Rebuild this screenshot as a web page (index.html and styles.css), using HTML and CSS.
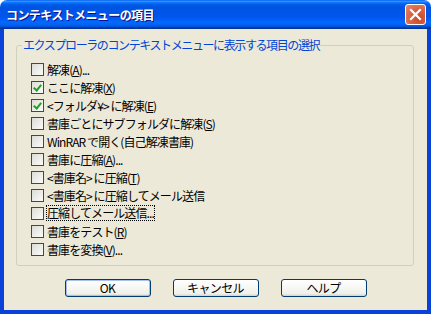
FILE: index.html
```html
<!DOCTYPE html>
<html lang="ja">
<head>
    <meta charset="UTF-8">
    <title>コンテキストメニューの項目</title>
    <link rel="stylesheet" href="styles.css">
</head>
<body>
    <div class="window">
        <div class="titlebar">
            <span class="title">コンテキストメニューの項目</span>
            <span class="close-btn">
                <svg width="13" height="13" viewBox="0 0 13 13">
                    <path d="M2 2 L11 11 M11 2 L2 11" stroke="#fff" stroke-width="2.2" stroke-linecap="square"/>
                </svg>
            </span>
        </div>

        <div class="client">
            <fieldset class="group">
                <legend>エクスプローラのコンテキストメニューに表示する項目の選択</legend>
                <ul class="items">
                    <li><span class="check"></span><span>解凍(<u>A</u>)...</span></li>
                    <li><span class="check on"></span><span>ここに解凍(<u>X</u>)</span></li>
                    <li><span class="check on"></span><span>&lt;フォルダ¥&gt; に解凍(<u>E</u>)</span></li>
                    <li><span class="check"></span><span>書庫ごとにサブフォルダに解凍(<u>S</u>)</span></li>
                    <li><span class="check"></span><span>WinRAR で開く(自己解凍書庫)</span></li>
                    <li><span class="check"></span><span>書庫に圧縮(<u>A</u>)...</span></li>
                    <li><span class="check"></span><span>&lt;書庫名&gt; に圧縮(<u>T</u>)</span></li>
                    <li><span class="check"></span><span>&lt;書庫名&gt; に圧縮してメール送信</span></li>
                    <li><span class="check"></span><span class="focus">圧縮してメール送信...</span></li>
                    <li><span class="check"></span><span>書庫をテスト(<u>R</u>)</span></li>
                    <li><span class="check"></span><span>書庫を変換(<u>V</u>)...</span></li>
                </ul>
            </fieldset>

            <div class="buttons">
                <button class="btn default">OK</button>
                <button class="btn">キャンセル</button>
                <button class="btn">ヘルプ</button>
            </div>
        </div>
    </div>
</body>
</html>
```

FILE: styles.css
```css
body {
    margin: 0;
    background: #fff;
    font-family: "Noto Sans CJK JP", "Liberation Sans", sans-serif;
    font-size: 12px;
}
.window {
    width: 431px;
    height: 314px;
    display: flex;
    flex-direction: column;
}
.titlebar {
    height: 29px;
    flex-shrink: 0;
    display: flex;
    align-items: center;
    justify-content: space-between;
    padding: 0 5px 0 6px;
    border-radius: 7px 7px 0 0;
    background: linear-gradient(#0058ee 0%, #3593ff 4%, #288eff 6%, #127dff 8%, #036ffc 10%, #0262ee 14%, #0057e5 20%, #0054e3 24%, #0055eb 56%, #005bf5 66%, #026afe 76%, #0062ef 86%, #0052d6 92%, #0040ab 94%, #003092 100%);
}
.title {
    color: #fff;
    font-weight: bold;
    font-size: 12px;
    letter-spacing: -0.6px;
    text-shadow: 1px 1px #0f1089;
}
.close-btn {
    width: 21px;
    height: 21px;
    box-sizing: border-box;
    border: 1px solid #fff;
    border-radius: 3px;
    display: flex;
    align-items: center;
    justify-content: center;
    background: radial-gradient(circle at 70% 70%, #cc4627 0%, #dc6648 55%, #e7896b 100%);
}
.client {
    flex: 1;
    background: #ece9d8;
    border: 4px solid #0842d8;
    border-top: none;
    display: flex;
    flex-direction: column;
}
.group {
    margin: 9px 13px 0 12px;
    padding: 8px 8px 7px 14px;
    border: 1px solid #d0d0bf;
    border-radius: 3px;
}
.group legend {
    color: #0046d5;
    padding: 0 1px;
    margin-left: -9px;
    line-height: 14px;
    letter-spacing: -1.4px;
}
.items {
    list-style: none;
    margin: 0;
    padding: 0;
}
.items li {
    height: 18px;
    display: flex;
    align-items: center;
    gap: 3px;
    letter-spacing: -0.9px;
    white-space: nowrap;
}
.check {
    width: 13px;
    height: 13px;
    box-sizing: border-box;
    border: 1px solid #1c5180;
    background: linear-gradient(135deg, #dcdcd7, #fbfbf9);
    flex-shrink: 0;
    position: relative;
}
.check.on::after {
    content: "";
    position: absolute;
    left: 3px;
    top: 1px;
    width: 3px;
    height: 6px;
    border: solid #21a121;
    border-width: 0 2px 2px 0;
    transform: rotate(40deg);
}
.focus {
    outline: 1px dotted #000;
    line-height: 14px;
}
.buttons {
    display: flex;
    justify-content: center;
    gap: 22px;
    margin-top: 13px;
}
.btn {
    width: 86px;
    height: 18px;
    padding: 0;
    font-family: inherit;
    font-size: 12px;
    line-height: 16px;
    letter-spacing: -0.6px;
    color: #000;
    border: 1px solid #003c74;
    border-radius: 3px;
    background: linear-gradient(#fff, #f0f0ea 85%, #d6d0c5);
}
.btn.default {
    box-shadow: inset 0 0 0 1px #a9c1ef;
}
```
